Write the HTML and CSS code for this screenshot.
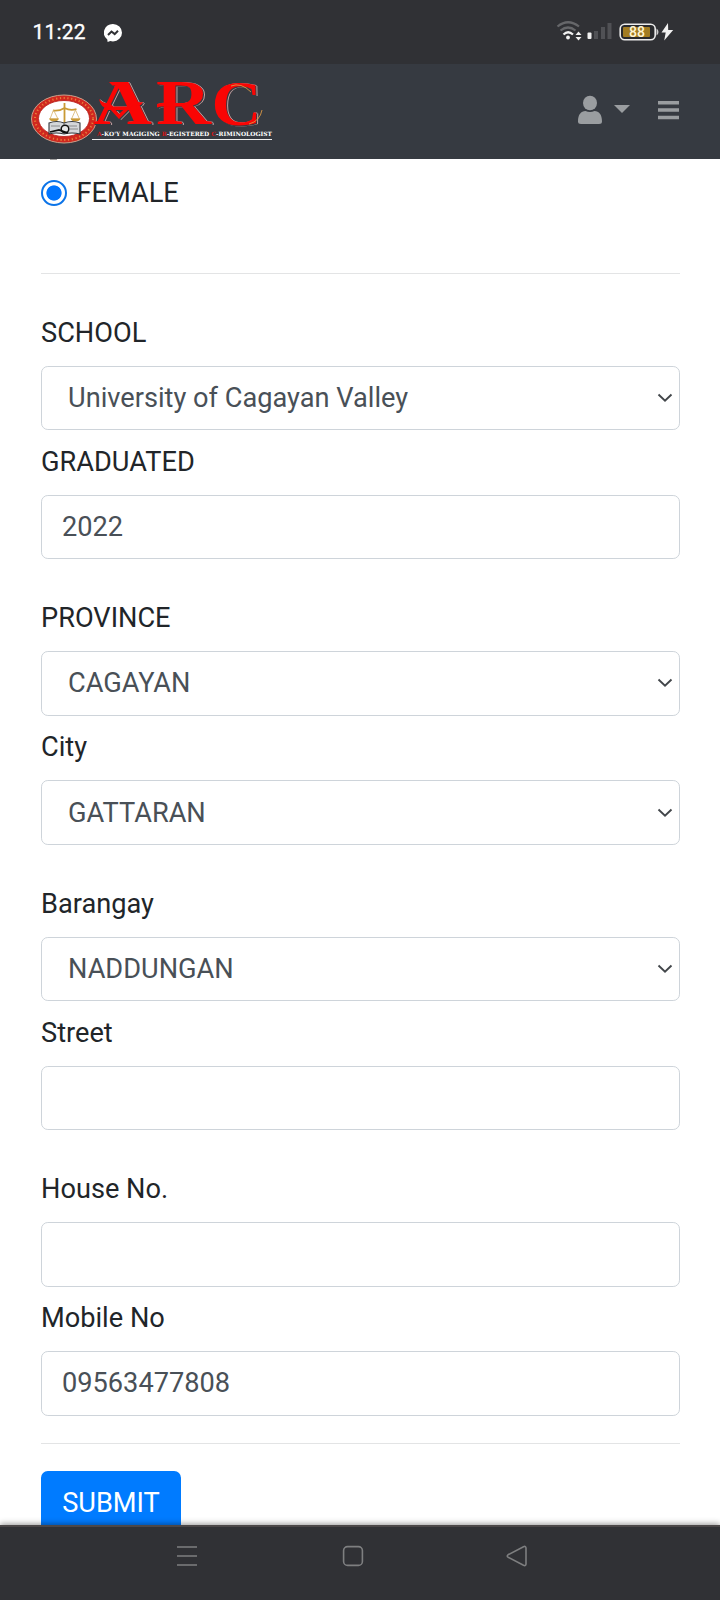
FILE: index.html
```html
<!DOCTYPE html>
<html lang="en">
<head>
<meta charset="utf-8">
<title>ARC Profile</title>
<link rel="stylesheet" href="styles.css">
</head>
<body>
<div class="screen">
  <div class="statusbar">
    <span class="clock">11:22</span>
    <svg class="messenger" width="18" height="18" viewBox="0 0 18 18"><path d="M9 0a9 8.7 0 0 1 0 17.4q-1.500-.05-2.700-.45L3.600 18 3.300 15.500A9 8.700 0 0 1 9 0Z" fill="#fff"/><path d="M4 11l3.500-3.500 3.200 2.600L14 6.800" fill="none" stroke="#303135" stroke-width="2"/></svg>
    <svg class="signals" width="118" height="24" viewBox="556 20 118 24">
      <g fill="none" stroke-width="2.200"><path d="M557.500 26.500q10.500-8.500 21.500 0" stroke="#66676a"/><path d="M560.500 30.500q7.500-6 15 0" stroke="#66676a"/><path d="M563.500 34.500q4.500-4.500 9.500 0" stroke="#f1f1f1"/></g>
      <circle cx="568" cy="37.500" r="1.900" fill="#f1f1f1"/><path d="M575.500 35h6l-3-3.500zM575.500 37h6l-3 3.500z" fill="#f1f1f1"/>
      <rect x="587.500" y="32.500" width="4" height="6.500" rx="1" fill="#f1f1f1"/><path d="M594 31h4v8h-4zM601 27h4v12h-4zM607.500 23h4v16h-4z" fill="#505155"/>
      <rect x="620.200" y="24.200" width="35" height="15.500" rx="4.500" fill="#292a2d" stroke="#ececec" stroke-width="1.600"/><rect x="623" y="27" width="27" height="10" rx="1" fill="#a27c22"/><path d="M656.500 28.500q2 1 2 3.500t-2 3.500z" fill="#ccc"/>
      <text x="637" y="36.500" class="battery" text-anchor="middle">88</text><path d="M668 23l-6.500 9.500h4.200l-1.500 8 9-10.500h-5z" fill="#f1f1f1"/>
    </svg>
  </div>
  <header class="header">
    <svg class="logo" width="250" height="70" viewBox="28 76 250 70">
      <ellipse cx="64" cy="119" rx="32.500" ry="24" fill="#d0281f" stroke="#c9a08b" stroke-width="1"/>
      <ellipse cx="64" cy="119" rx="29" ry="21" fill="none" stroke="#e8803a" stroke-width="2" stroke-dasharray="1.200 2.600"/>
      <ellipse cx="64" cy="118.500" rx="25.500" ry="18" fill="#fff" stroke="#b51612" stroke-width=".8"/>
      <path d="M64.500 103v22M53 110.500q6 1 11.500-2.500 6 3 12 1" fill="none" stroke="#c99a35" stroke-width="1.800"/>
      <path d="M53.500 110l-3.500 9h8zM75.500 110l-4 9h8z" fill="none" stroke="#d7b36a" stroke-width=".8"/><path d="M49 118.500h10q-1 3-5 3t-5-3M70.500 118.500h10q-1 3-5 3t-5-3" fill="#c99a35"/>
      <path d="M49 123q8-3 15 0 8-3 16 0v11q-8-2-16 0-8-2-15 0z" fill="#d4d7da" stroke="#33373c" stroke-width="1.100"/><path d="M64 123v11M51 126h9M67 126h10M70 129h8" stroke="#777" stroke-width=".8" fill="none"/><circle cx="65" cy="129" r="3.800" fill="#e7e9ea" stroke="#111" stroke-width="1.500"/><path d="M50 132l9-2 9 3" stroke="#111" stroke-width="1.700" fill="none"/>
      <g class="letters">
        <text x="93" y="124" textLength="59" lengthAdjust="spacingAndGlyphs">A</text><text x="156" y="124" textLength="55" lengthAdjust="spacingAndGlyphs">R</text><text x="211.500" y="124.500" textLength="50" lengthAdjust="spacingAndGlyphs">C</text>
        <path d="M109 82h19l-2.500 3.500h-13zM99 99q4 5 11 4l9 11 15-14q3 3 9 2l-2 3q-5 1-7-1l-15 15-10-11q-8 1-10-9zM157 104q4-2 14-1v3.500q-9-1-14 1z"/>
      </g>
      <path d="M231 86q10-4 20 6M262 110q-2 11-13 14" fill="none" stroke="#d99745" stroke-width=".9"/>
      <text class="tagline" x="97" y="136.200" textLength="175" lengthAdjust="spacingAndGlyphs"><tspan class="red">A</tspan>-KO'Y MAGIGING <tspan class="red">R</tspan>-EGISTERED <tspan class="red">C</tspan>-RIMINOLOGIST</text>
      <path d="M92 139.500h180" stroke="#eee" stroke-width="1"/>
    </svg>
    <svg class="actions" width="104" height="34" viewBox="576 92 104 34" fill="#9a9da0"><ellipse cx="590" cy="103" rx="7" ry="7.300"/><path d="M578 121.500c0-7 3-10.500 7.500-10.500q4.500 2 9 0c4.500 0 7.500 3.500 7.500 10.500q0 2.500-3 2.500h-18q-3 0-3-2.500zM614 105h16l-8 8z"/><path d="M658 101h21v3.500h-21zM658 108.300h21v3.500h-21zM658 115.800h21v3.500h-21z"/></svg>
  </header>
  <main class="content">
    <div class="radio-tip"></div>
    <label class="radio"><span class="dot"></span>FEMALE</label>
    <div class="rule"></div>
    <div class="group">
      <div class="field"><label>SCHOOL</label><div class="control select">University of Cagayan Valley<svg class="chevron" width="16" height="10" viewBox="0 0 16 10"><path d="M1.500 1.500L8 7.700l6.500-6.200"/></svg></div></div>
      <div class="field"><label>GRADUATED</label><div class="control">2022</div></div>
    </div>
    <div class="group">
      <div class="field"><label>PROVINCE</label><div class="control select">CAGAYAN<svg class="chevron" width="16" height="10" viewBox="0 0 16 10"><path d="M1.500 1.500L8 7.700l6.500-6.200"/></svg></div></div>
      <div class="field"><label>City</label><div class="control select">GATTARAN<svg class="chevron" width="16" height="10" viewBox="0 0 16 10"><path d="M1.500 1.500L8 7.700l6.500-6.200"/></svg></div></div>
    </div>
    <div class="group">
      <div class="field"><label>Barangay</label><div class="control select">NADDUNGAN<svg class="chevron" width="16" height="10" viewBox="0 0 16 10"><path d="M1.500 1.500L8 7.700l6.500-6.200"/></svg></div></div>
      <div class="field"><label>Street</label><div class="control"></div></div>
    </div>
    <div class="group">
      <div class="field"><label>House No.</label><div class="control"></div></div>
      <div class="field"><label>Mobile No</label><div class="control">09563477808</div></div>
    </div>
    <div class="rule end"></div>
    <button class="submit">SUBMIT</button>
  </main>
  <nav class="navbar">
    <svg width="22" height="22" viewBox="0 0 22 22"><path d="M1 2h20M1 11h20M1 20h20"/></svg>
    <svg width="22" height="22" viewBox="0 0 22 22"><rect x="1.600" y="1.600" width="18.800" height="18.800" rx="4"/></svg>
    <svg class="back" width="22" height="22" viewBox="0 0 22 22"><path d="M2 9.800L17.500 1.700q2.500-1 2.500 1.500v15.600q0 2.500-2.500 1.500L2 12.200q-1.500-1.200 0-2.400z"/></svg>
  </nav>
</div>
</body>
</html>
```
FILE: styles.css
```css
* { box-sizing: border-box; }
body { margin: 0; background: #fff; font-family: Roboto, "Liberation Sans", sans-serif; font-size: 27.2px; color: #212529; }
.screen { display: flex; flex-direction: column; width: 720px; height: 1600px; overflow: hidden; }
.statusbar { flex: none; display: flex; align-items: center; height: 64px; padding: 0 46px 0 32.500px; background: #303135; }
.clock { width: 71px; color: #fff; font-size: 21px; font-weight: 400; letter-spacing: .2px; -webkit-text-stroke: .3px #fff; }
.messenger { margin-top: 1px; }
.signals { margin-left: auto; }
.battery { font: 500 14px Roboto, sans-serif; fill: #fff4d4; }
.header { flex: none; display: flex; align-items: flex-start; justify-content: space-between; height: 95px; padding: 12px 40px 0 28px; background: #363a41; }
.logo { overflow: visible; }
.letters { font: bold 64px "Liberation Serif", serif; fill: #fa0504; filter: drop-shadow(1.500px 1px 0 #363a41) drop-shadow(1px .7px 0 #c3a0a0); }
.tagline { font: bold 5.800px "DejaVu Serif", serif; fill: #fff; }
.red { fill: #d51515; }
.actions { margin-top: 16px; }
.content { flex: 1; min-height: 0; overflow: hidden; padding: 0 40px 0 41px; }
.radio-tip { width: 7px; height: 1px; margin-left: 9px; background: #a5a5a5; }
.radio { display: flex; align-items: center; gap: 10px; height: 41px; margin: 12px 0 0 -.5px; }
.dot { width: 26px; height: 26px; border: 2px solid #0c74e8; border-radius: 50%; background: radial-gradient(circle, #0075ff 7.200px, #fff 8px); }
.rule { height: 1px; margin-top: 60px; background: #e3e4e5; }
.group { display: flex; flex-direction: column; gap: 10.600px; margin-top: 37.900px; }
.rule + .group { margin-top: 37.700px; }
.field { display: flex; flex-direction: column; gap: 12.200px; }
.field label { height: 42px; line-height: 42px; }
.control { display: flex; align-items: center; height: 64.300px; padding: 0 20px; border: 1px solid #ced4da; border-radius: 6.800px; color: #495057; line-height: 40px; }
.select { justify-content: space-between; padding: 0 6px 0 26px; }
.chevron { fill: none; stroke: #42464a; stroke-width: 1.900; }
.rule.end { margin-top: 27.200px; }
.submit { display: block; width: 140px; height: 64.300px; margin-top: 27px; padding: 0; border: 0; border-radius: 6.800px; background: #007bff; color: #fff; font: inherit; }
.navbar { position: relative; flex: none; display: flex; align-items: flex-start; gap: 144px; height: 75px; padding: 18px 0 0 176px; background: #303135; border-top: 2px solid #4b4748; box-shadow: 0 -1px 6px rgba(0, 0, 0, .42); }
.navbar svg { fill: none; stroke: #7e7f80; stroke-width: 1.600; }
.navbar .back { margin-left: -2px; }
```
